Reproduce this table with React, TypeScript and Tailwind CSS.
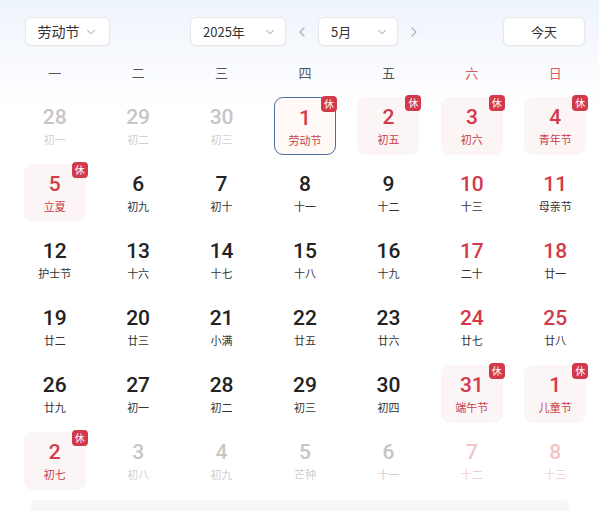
import { ChevronDown, ChevronLeft, ChevronRight } from "lucide-react";

type Day = {
  d: number;
  lunar: string;
  out?: boolean; // not in current month
  weekend?: boolean;
  rest?: boolean; // 休
  selected?: boolean;
};

const weekdays = ["一", "二", "三", "四", "五", "六", "日"];

const days: Day[] = [
  { d: 28, lunar: "初一", out: true },
  { d: 29, lunar: "初二", out: true },
  { d: 30, lunar: "初三", out: true },
  { d: 1, lunar: "劳动节", rest: true, selected: true },
  { d: 2, lunar: "初五", rest: true },
  { d: 3, lunar: "初六", rest: true, weekend: true },
  { d: 4, lunar: "青年节", rest: true, weekend: true },
  { d: 5, lunar: "立夏", rest: true },
  { d: 6, lunar: "初九" },
  { d: 7, lunar: "初十" },
  { d: 8, lunar: "十一" },
  { d: 9, lunar: "十二" },
  { d: 10, lunar: "十三", weekend: true },
  { d: 11, lunar: "母亲节", weekend: true },
  { d: 12, lunar: "护士节" },
  { d: 13, lunar: "十六" },
  { d: 14, lunar: "十七" },
  { d: 15, lunar: "十八" },
  { d: 16, lunar: "十九" },
  { d: 17, lunar: "二十", weekend: true },
  { d: 18, lunar: "廿一", weekend: true },
  { d: 19, lunar: "廿二" },
  { d: 20, lunar: "廿三" },
  { d: 21, lunar: "小满" },
  { d: 22, lunar: "廿五" },
  { d: 23, lunar: "廿六" },
  { d: 24, lunar: "廿七", weekend: true },
  { d: 25, lunar: "廿八", weekend: true },
  { d: 26, lunar: "廿九" },
  { d: 27, lunar: "初一" },
  { d: 28, lunar: "初二" },
  { d: 29, lunar: "初三" },
  { d: 30, lunar: "初四" },
  { d: 31, lunar: "端午节", rest: true, weekend: true },
  { d: 1, lunar: "儿童节", rest: true, weekend: true, out: true },
  { d: 2, lunar: "初七", rest: true, out: true },
  { d: 3, lunar: "初八", out: true },
  { d: 4, lunar: "初九", out: true },
  { d: 5, lunar: "芒种", out: true },
  { d: 6, lunar: "十一", out: true },
  { d: 7, lunar: "十二", out: true, weekend: true },
  { d: 8, lunar: "十三", out: true, weekend: true },
];

function SelectBox({ label, width }: { label: string; width: string }) {
  return (
    <button
      className={`flex h-[29px] items-center justify-between rounded-md border border-[#e6e8ec] bg-white pl-[12px] pr-[8px] text-[13px] text-[#333] shadow-[0_1px_2px_rgba(0,0,0,0.04)] ${width}`}
    >
      <span>{label}</span>
      <ChevronDown className="h-[14px] w-[14px] text-[#999]" strokeWidth={1.6} />
    </button>
  );
}

function DayCell({ day }: { day: Day }) {
  let numColor = "text-[#222]";
  let lunarColor = "text-[#333]";
  if (day.out) {
    numColor = day.rest
      ? "text-[#d33a4a]"
      : day.weekend
        ? "text-[#f2c4c8]"
        : "text-[#c6c6c6]";
    lunarColor = day.rest
      ? "text-[#c9404d]"
      : day.weekend
        ? "text-[#f0cdd0]"
        : "text-[#d0d0d0]";
  } else if (day.rest || day.weekend) {
    numColor = "text-[#d33a4a]";
  }
  if (day.rest) lunarColor = "text-[#c9404d]";

  const box = day.selected
    ? "border-[1.5px] border-[#4f6ca8] bg-[#fffaf5]"
    : day.rest
      ? "bg-[#fcf5f5]"
      : "";

  return (
    <div className="flex justify-center">
      <div
        className={`relative flex h-[58px] w-[62px] flex-col items-center rounded-[9px] pt-[7px] ${box}`}
      >
        <span
          className={`text-[21px] leading-[26px] font-medium ${numColor}`}
          style={{ fontFamily: "Roboto, 'Noto Sans', sans-serif" }}
        >
          {day.d}
        </span>
        <span className={`mt-[2px] text-[11px] leading-[14px] ${lunarColor}`}>
          {day.lunar}
        </span>
        {day.rest && (
          <span className="absolute -top-[2px] -right-[2px] flex h-[16px] w-[16px] items-center justify-center rounded-[4px] bg-[#d2394b] text-[10px] leading-none text-white">
            休
          </span>
        )}
      </div>
    </div>
  );
}

export default function App() {
  return (
    <div
      className="h-[511px] w-[599px] overflow-hidden bg-[linear-gradient(to_bottom,#eef4fc_0px,#f8fafe_60px,#ffffff_110px)]"
      style={{ fontFamily: "'Noto Sans CJK SC', 'Noto Sans', sans-serif" }}
    >
      {/* Toolbar */}
      <div className="mt-[17px] flex h-[29px] items-center pl-[25px] pr-[14px]">
        <button className="flex h-[29px] w-[85px] items-center justify-center gap-[4px] rounded-md border border-[#e6e8ec] bg-white text-[14px] text-[#333] shadow-[0_1px_2px_rgba(0,0,0,0.04)]">
          劳动节
          <ChevronDown className="h-[14px] w-[14px] text-[#999]" strokeWidth={1.6} />
        </button>
        <div className="ml-[80px] flex items-center">
          <SelectBox label="2025年" width="w-[96px]" />
          <ChevronLeft className="mx-[8px] h-[16px] w-[16px] text-[#aaa]" strokeWidth={1.6} />
          <SelectBox label="5月" width="w-[80px]" />
          <ChevronRight className="mx-[8px] h-[16px] w-[16px] text-[#aaa]" strokeWidth={1.6} />
        </div>
        <button className="ml-auto flex h-[29px] w-[82px] items-center justify-center rounded-md border border-[#e6e8ec] bg-white text-[13px] text-[#333] shadow-[0_1px_2px_rgba(0,0,0,0.04)]">
          今天
        </button>
      </div>

      {/* Weekday header */}
      <div className="mt-[17px] grid grid-cols-7 pl-[13px] pr-[2px]">
        {weekdays.map((w, i) => (
          <div
            key={w}
            className={`text-center text-[13px] leading-[20px] ${i >= 5 ? "text-[#dd5a5f]" : "text-[#555]"}`}
          >
            {w}
          </div>
        ))}
      </div>

      {/* Days */}
      <div className="mt-[14px] grid grid-cols-7 auto-rows-[67px] pl-[13px] pr-[2px]">
        {days.map((day, i) => (
          <DayCell key={i} day={day} />
        ))}
      </div>

      <div className="mx-[30px] mt-[1px] h-[20px] rounded-t-md bg-[#f6f7f9]" />
    </div>
  );
}
